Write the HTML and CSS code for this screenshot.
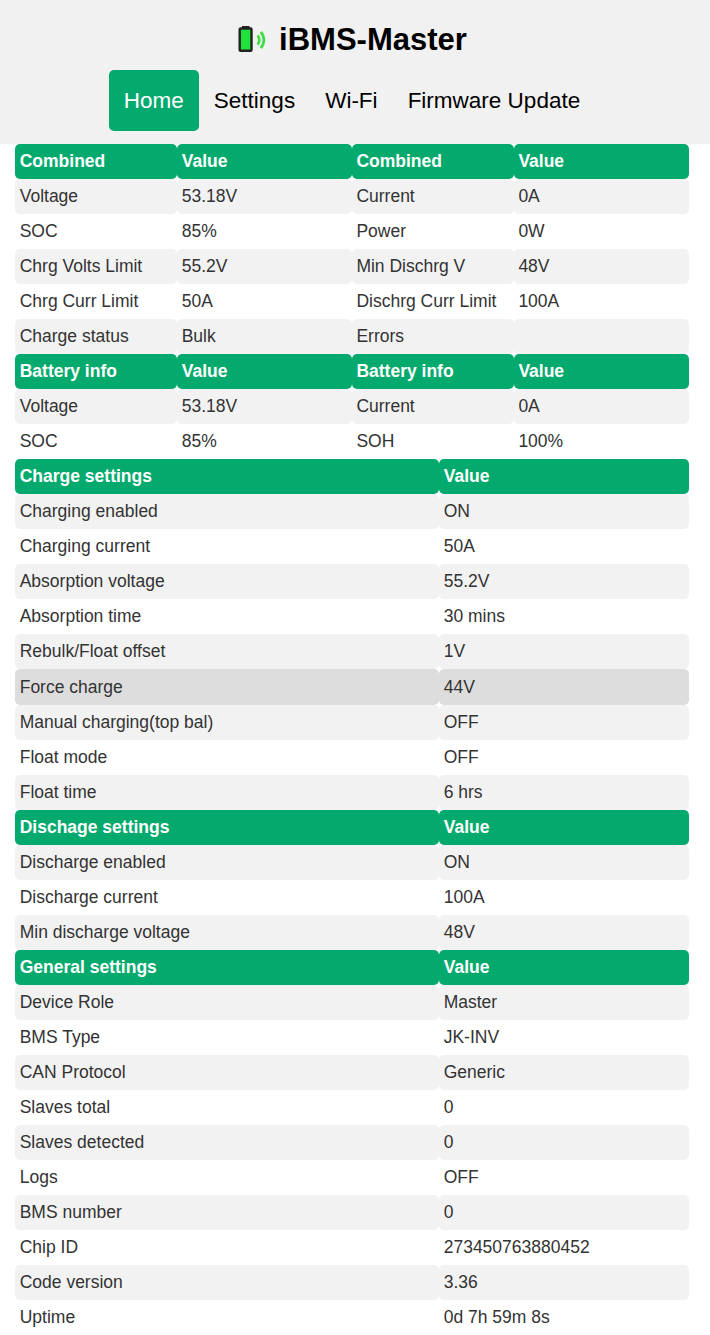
FILE: index.html
```html
<!DOCTYPE html>
<html lang="en">
<head>
<meta charset="utf-8">
<title>iBMS-Master</title>
<link rel="stylesheet" href="styles.css">
</head>
<body>
<header class="top">
  <h1 class="title">
    <svg class="logo" width="28" height="26" viewBox="0 0 28 26" aria-hidden="true">
      <rect x="4" y="0" width="7.500" height="3" fill="#222"/>
      <rect x="1.700" y="2.500" width="11.800" height="22.300" rx="0.800" fill="#1ee23a" stroke="#222" stroke-width="2.400"/>
      <path d="M19.500 9.500a6.500 6.500 0 0 1 0 9" fill="none" stroke="#3ddf45" stroke-width="2.600"/>
      <path d="M22.800 6a12 12 0 0 1 0 16" fill="none" stroke="#3ddf45" stroke-width="2.800"/>
    </svg>
    <span class="title-text">iBMS-Master</span>
  </h1>
  <nav class="nav">
    <a class="nav-link active" href="#">Home</a>
    <a class="nav-link" href="#">Settings</a>
    <a class="nav-link" href="#">Wi-Fi</a>
    <a class="nav-link" href="#">Firmware Update</a>
  </nav>
</header>
<main class="content">
  <table class="grid">
    <colgroup><col class="c1"><col class="c2"><col class="c3"><col class="c4"></colgroup>
    <tr><th>Combined</th><th>Value</th><th>Combined</th><th>Value</th></tr>
    <tr><td>Voltage</td><td>53.18V</td><td>Current</td><td>0A</td></tr>
    <tr><td>SOC</td><td>85%</td><td>Power</td><td>0W</td></tr>
    <tr><td>Chrg Volts Limit</td><td>55.2V</td><td>Min Dischrg V</td><td>48V</td></tr>
    <tr><td>Chrg Curr Limit</td><td>50A</td><td>Dischrg Curr Limit</td><td>100A</td></tr>
    <tr><td>Charge status</td><td>Bulk</td><td>Errors</td><td></td></tr>
  </table>
  <table class="grid">
    <colgroup><col class="c1"><col class="c2"><col class="c3"><col class="c4"></colgroup>
    <tr><th>Battery info</th><th>Value</th><th>Battery info</th><th>Value</th></tr>
    <tr><td>Voltage</td><td>53.18V</td><td>Current</td><td>0A</td></tr>
    <tr><td>SOC</td><td>85%</td><td>SOH</td><td>100%</td></tr>
  </table>
  <table class="grid">
    <colgroup><col class="wide"><col class="narrow"></colgroup>
    <tr><th>Charge settings</th><th>Value</th></tr>
    <tr><td>Charging enabled</td><td>ON</td></tr>
    <tr><td>Charging current</td><td>50A</td></tr>
    <tr><td>Absorption voltage</td><td>55.2V</td></tr>
    <tr><td>Absorption time</td><td>30 mins</td></tr>
    <tr><td>Rebulk/Float offset</td><td>1V</td></tr>
    <tr class="hover"><td>Force charge</td><td>44V</td></tr>
    <tr><td>Manual charging(top bal)</td><td>OFF</td></tr>
    <tr><td>Float mode</td><td>OFF</td></tr>
    <tr><td>Float time</td><td>6 hrs</td></tr>
  </table>
  <table class="grid">
    <colgroup><col class="wide"><col class="narrow"></colgroup>
    <tr><th>Dischage settings</th><th>Value</th></tr>
    <tr><td>Discharge enabled</td><td>ON</td></tr>
    <tr><td>Discharge current</td><td>100A</td></tr>
    <tr><td>Min discharge voltage</td><td>48V</td></tr>
  </table>
  <table class="grid">
    <colgroup><col class="wide"><col class="narrow"></colgroup>
    <tr><th>General settings</th><th>Value</th></tr>
    <tr><td>Device Role</td><td>Master</td></tr>
    <tr><td>BMS Type</td><td>JK-INV</td></tr>
    <tr><td>CAN Protocol</td><td>Generic</td></tr>
    <tr><td>Slaves total</td><td>0</td></tr>
    <tr><td>Slaves detected</td><td>0</td></tr>
    <tr><td>Logs</td><td>OFF</td></tr>
    <tr><td>BMS number</td><td>0</td></tr>
    <tr><td>Chip ID</td><td>27345076388045&#8203;2</td></tr>
    <tr><td>Code version</td><td>3.36</td></tr>
    <tr><td>Uptime</td><td>0d 7h 59m 8s</td></tr>
  </table>
</main>
</body>
</html>
```
FILE: styles.css
```css
html, body {
  margin: 0;
  padding: 0;
  background: #fff;
  font-family: "Liberation Sans", Arial, sans-serif;
}

.top {
  background: #f1f1f1;
  height: 144px;
  box-sizing: border-box;
  padding-top: 15px;
}

.title {
  margin: 0;
  height: 48px;
  padding-right: 5px;
  display: flex;
  align-items: center;
  justify-content: center;
  gap: 13px;
  font-size: 31px;
  font-weight: bold;
  color: #000;
  line-height: 38px;
}

.title-text {
  padding-top: 2px;
}

.logo {
  display: block;
}

.nav {
  display: flex;
  justify-content: center;
  margin-top: 7px;
  padding-right: 6px;
}

.nav-link {
  display: block;
  padding: 18px 15px 17px;
  font-size: 22.5px;
  line-height: 26px;
  color: #000;
  text-decoration: none;
  border-radius: 5px;
}

.nav-link.active {
  background: #04aa6d;
  color: #fff;
}

.content {
  margin: 0 21px 0 15px;
}

.grid {
  width: 674px;
  border-collapse: collapse;
  table-layout: fixed;
  font-size: 17.5px;
  color: #333;
}

.grid th,
.grid td {
  height: 35px;
  box-sizing: border-box;
  padding: 0 4.700px;
  text-align: left;
  white-space: nowrap;
  border-radius: 5px;
}

.grid th {
  background: #04aa6d;
  color: #fff;
  font-weight: bold;
}

.grid tr:nth-child(even) td {
  background: #f2f2f2;
}

.grid tr.hover td {
  height: 36px;
  background: #ddd;
}

.c1 { width: 162px; }
.c2 { width: 174.700px; }
.c3 { width: 162px; }
.c4 { width: 175.300px; }
.wide { width: 424px; }
.narrow { width: 250px; }
```
